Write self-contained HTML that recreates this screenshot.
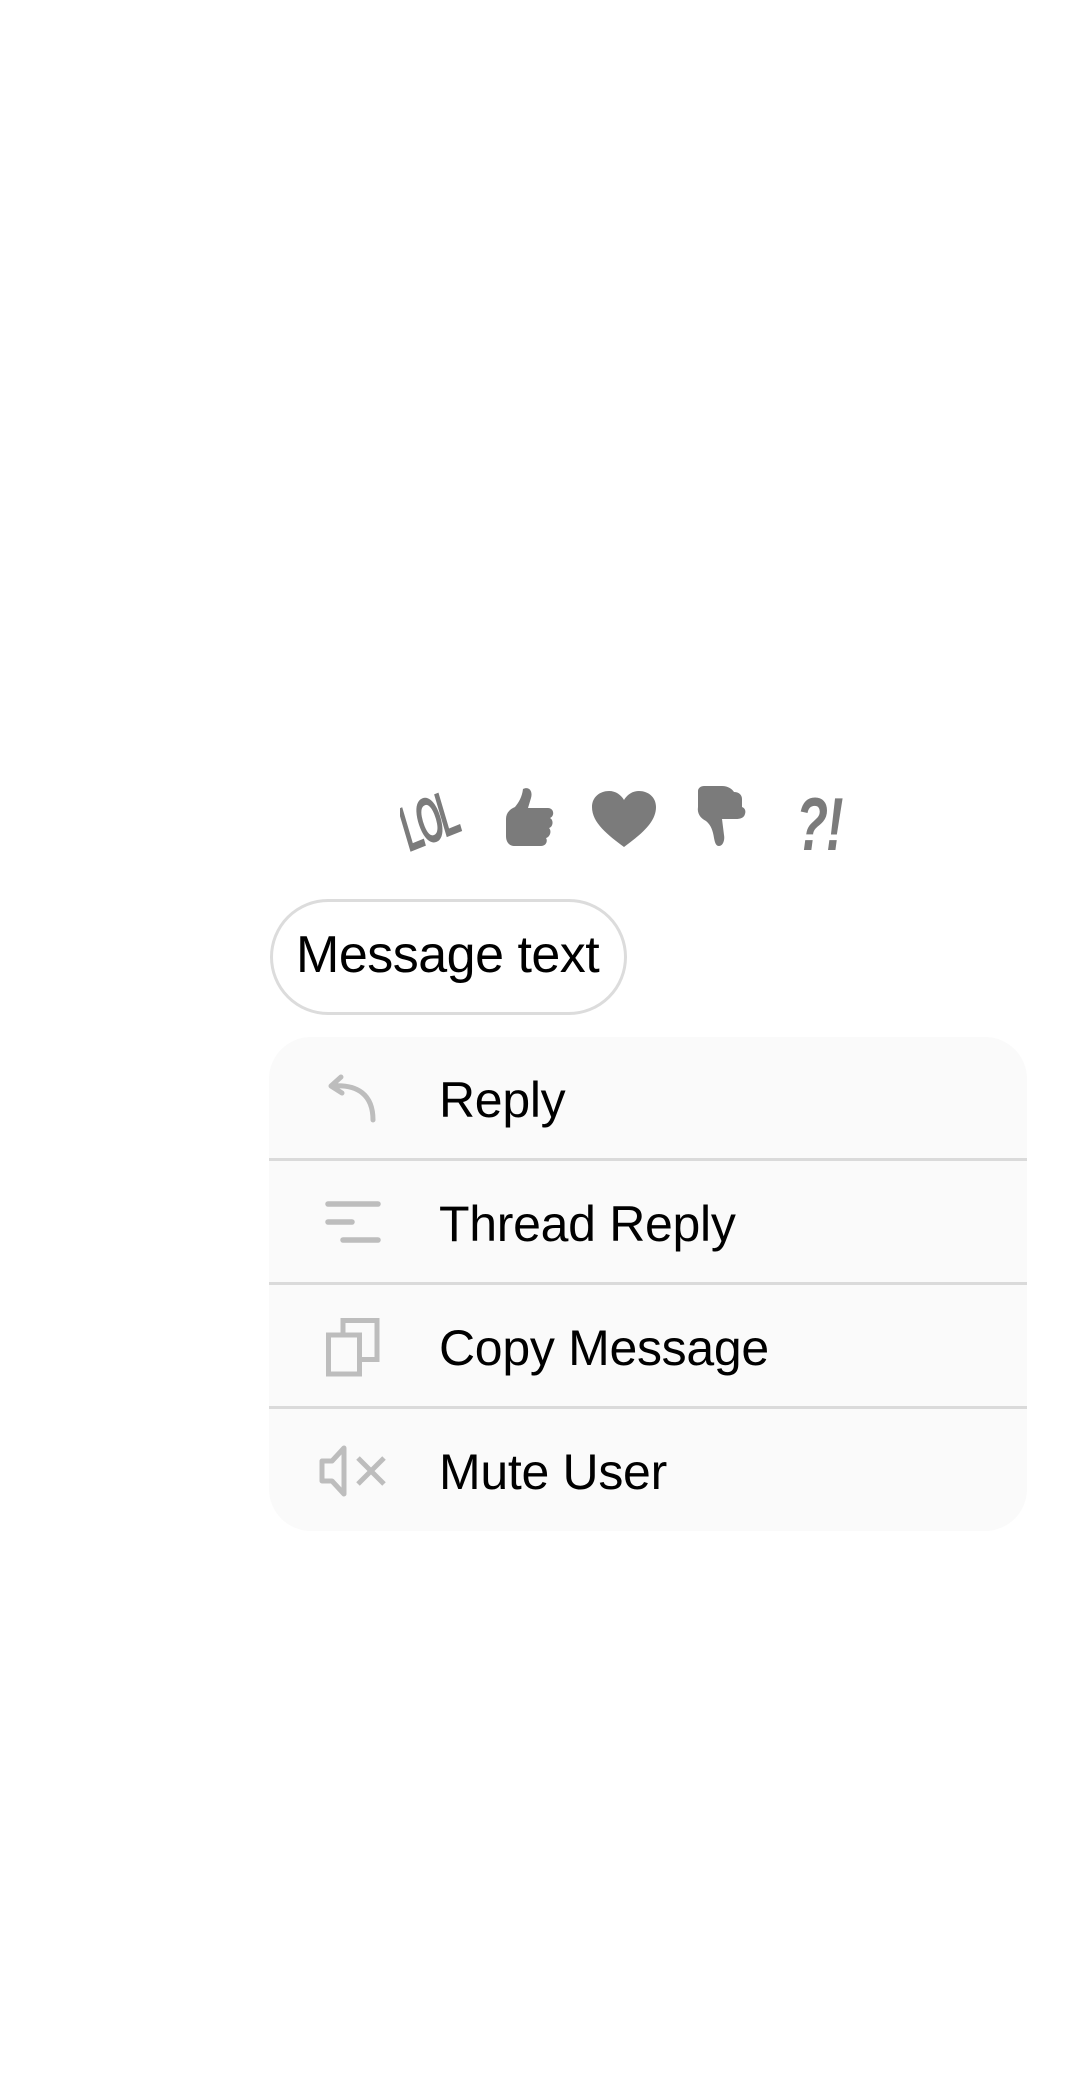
<!DOCTYPE html>
<html><head><meta charset="utf-8"><style>
html,body{margin:0;padding:0;background:#fff;width:1080px;height:2100px;position:relative;overflow:hidden;font-family:"Liberation Sans",sans-serif;}
.abs{position:absolute}
.bubble{left:270px;top:899px;width:351px;height:110px;border:3px solid #dcdcdc;border-radius:58px;box-sizing:content-box;}
.bubble span{position:absolute;left:23px;top:23px;font-size:52px;color:#000;letter-spacing:-0.5px}
.menu{left:269px;top:1037px;width:758px;height:494px;background:#fafafa;border-radius:42px;overflow:hidden}
.row{position:absolute;left:0;width:758px;height:124px}
.row span{position:absolute;left:170px;top:34px;font-size:50px;color:#000;letter-spacing:-0.3px}
.sep{position:absolute;left:0;width:758px;height:3px;background:#dadada}
svg{position:absolute}
</style></head><body>
<!-- reactions -->
<svg class="abs" style="left:400px;top:780px" width="80" height="80" viewBox="0 0 80 80">
<g transform="translate(10 72) rotate(-22) scale(0.95 1.9)"><text x="0" y="0" font-family="Liberation Sans" font-weight="bold" font-size="34" fill="#7b7b7b" font-style="italic" letter-spacing="-3">LOL</text></g>
</svg>
<svg class="abs" style="left:503px;top:785px" width="56" height="64" viewBox="0 0 56 64">
<path d="M20 4c6-3 10 2 8 9l-3 10h20c6 0 7 8 2 10 4 2 3 9-1 10 3 3 1 9-3 10 2 3 0 8-5 8H12c-6 0-9-4-9-10V34c0-6 4-10 9-12 4-5 7-10 8-18z" fill="#7b7b7b"/>
</svg>
<svg class="abs" style="left:590px;top:789px" width="68" height="60" viewBox="0 0 68 60">
<path d="M34 58C18 46 2 34 2 18 2 8 10 2 19 2c7 0 12 4 15 9 3-5 8-9 15-9 9 0 17 6 17 16 0 16-16 28-32 40z" fill="#7b7b7b"/>
</svg>
<svg class="abs" style="left:694px;top:785px" width="52" height="64" viewBox="0 0 52 64">
<path d="M4 6c0-3 3-5 6-5h18c6 0 10 3 12 6 5 0 8 3 8 7v8c3 1 4 4 3 7-1 4-5 5-9 5H28l2 16c1 5-1 11-5 11-3 0-4-3-5-8-1-7-3-13-8-17C6 33 3 28 4 22z" fill="#7b7b7b"/>
</svg>
<svg class="abs" style="left:794px;top:780px" width="70" height="80" viewBox="0 0 70 80">
<g transform="translate(2 70) scale(1.05 1.5)"><text x="0" y="0" font-family="Liberation Sans" font-weight="bold" font-size="50" fill="#7b7b7b" font-style="italic" letter-spacing="-2">?!</text></g>
</svg>

<div class="abs bubble"><span>Message text</span></div>

<div class="abs menu">
 <div class="row" style="top:0"><span>Reply</span>
  <svg style="left:56px;top:36px" width="56" height="50" viewBox="0 0 56 50"><path d="M16 4 6 13l11 7M7 13c26-2 41 9 41 34" fill="none" stroke="#bdbdbd" stroke-width="5" stroke-linecap="round" stroke-linejoin="round"/></svg>
 </div>
 <div class="sep" style="top:121px"></div>
 <div class="row" style="top:124px"><span>Thread Reply</span>
  <svg style="left:55px;top:40px" width="58" height="42" viewBox="0 0 58 42"><path d="M4 3h50M4 21h24M19 39h35" stroke="#bdbdbd" stroke-width="5.5" stroke-linecap="round"/></svg>
 </div>
 <div class="sep" style="top:245px"></div>
 <div class="row" style="top:248px"><span>Copy Message</span>
  <svg style="left:55px;top:31px" width="58" height="62" viewBox="0 0 58 62"><rect x="4.5" y="19" width="31" height="39" fill="none" stroke="#bdbdbd" stroke-width="5"/><path d="M19 18V4.5h34v39h-16" fill="none" stroke="#bdbdbd" stroke-width="5"/></svg>
 </div>
 <div class="sep" style="top:369px"></div>
 <div class="row" style="top:372px"><span>Mute User</span>
  <svg style="left:49px;top:35px" width="74" height="54" viewBox="0 0 74 54"><path d="M4 17h10L26 4v46L14 37H4z" fill="none" stroke="#bdbdbd" stroke-width="5" stroke-linejoin="round"/><path d="M40 14l26 26M66 14 40 40" stroke="#bdbdbd" stroke-width="5"/></svg>
 </div>
</div>
</body></html>
